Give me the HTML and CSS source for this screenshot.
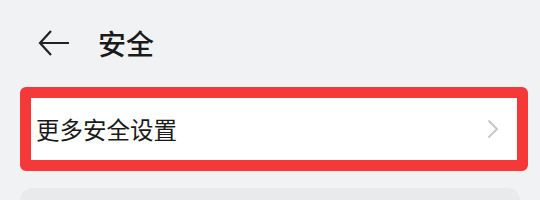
FILE: index.html
```html
<!DOCTYPE html>
<html lang="zh-CN">
<head>
    <meta charset="UTF-8">
    <meta name="viewport" content="width=device-width, initial-scale=1.0">
    <title>安全</title>
    <link rel="stylesheet" href="styles.css">
</head>
<body>
    <div class="header">
        <svg class="back" width="32" height="28" viewBox="0 0 32 28">
            <path d="M13 2 L2 14 L13 26 M2 14 H31" fill="none" stroke="#222" stroke-width="2.2"/>
        </svg>
        <h1>安全</h1>
    </div>
    <div class="list">
        <div class="item highlighted">
            <span>更多安全设置</span>
            <svg class="chevron" width="12" height="20" viewBox="0 0 12 20">
                <path d="M1.5 1.5 L10 10 L1.5 18.5" fill="none" stroke="#c6c6c6" stroke-width="2"/>
            </svg>
        </div>
        <div class="card"></div>
    </div>
</body>
</html>
```

FILE: styles.css
```css
body {
    margin: 0;
    padding: 0;
    background-color: #f1f2f4;
    font-family: "Noto Sans CJK SC", "Noto Sans", sans-serif;
    color: #1a1a1a;
    width: 540px;
    height: 200px;
    overflow: hidden;
}

.header {
    height: 86px;
    display: flex;
    align-items: center;
    padding-left: 38px;
}

.back {
    margin-right: 28px;
}

.header h1 {
    margin: 0;
    font-size: 28px;
    font-weight: 500;
    line-height: 1;
}

.list {
    padding: 1px 12px 0 20px;
}

.item {
    display: flex;
    align-items: center;
    justify-content: space-between;
    height: 62px;
    padding: 0 18px 0 5px;
    background-color: #ffffff;
    font-size: 23.5px;
}

.highlighted {
    border: 11px solid #f53838;
    border-radius: 6px;
}

.card {
    margin-top: 17px;
    width: 500px;
    height: 13px;
    background-color: #e9eaec;
    border-radius: 16px 16px 0 0;
}
```
